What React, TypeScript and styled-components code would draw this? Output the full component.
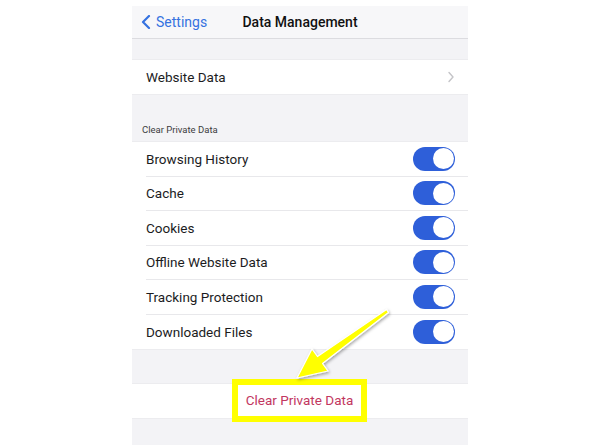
import styled, { createGlobalStyle } from "styled-components";

const GlobalStyle = createGlobalStyle`
  body {
    margin: 0;
    background: #ffffff;
    font-family: Roboto, Inter, sans-serif;
  }
`;

const Page = styled.div`
  position: relative;
  width: 600px;
  height: 445px;
  overflow: hidden;
  background: #ffffff;
`;

const Phone = styled.div`
  width: 336px;
  height: 439px;
  margin: 6px auto 0;
  background: #f3f3f6;
  display: flex;
  flex-direction: column;
`;

const NavBar = styled.div`
  height: 32px;
  flex: none;
  display: grid;
  grid-template-columns: 1fr auto 1fr;
  align-items: center;
  background: #f7f7f9;
  border-bottom: 1px solid #dcdce0;
`;

const BackButton = styled.div`
  display: flex;
  align-items: center;
  gap: 5px;
  padding-left: 9px;
  color: #3572e0;
  font-size: 14px;
`;

const Title = styled.div`
  font-size: 14px;
  font-weight: 500;
  color: #111;
`;

const Gap = styled.div<{ $h: number }>`
  height: ${(p) => p.$h}px;
  flex: none;
`;

const SectionHeader = styled.div`
  height: 46px;
  flex: none;
  display: flex;
  align-items: flex-end;
  padding: 0 0 6px 10px;
  box-sizing: border-box;
  font-size: 9.5px;
  color: #3c3c40;
`;

const Group = styled.div`
  background: #ffffff;
  border-top: 1px solid #ececef;
  border-bottom: 1px solid #ececef;
  flex: none;
`;

const Row = styled.div`
  padding-left: 14px;
`;

const RowInner = styled.div<{ $last?: boolean; $h?: number }>`
  height: ${(p) => p.$h ?? 34.5}px;
  box-sizing: border-box;
  display: flex;
  align-items: center;
  justify-content: space-between;
  padding-right: 13px;
  border-bottom: ${(p) => (p.$last ? "none" : "1px solid #e8e8eb")};
  font-size: 13.5px;
  color: #1c1c1e;
`;

const Toggle = styled.div`
  width: 42px;
  height: 24px;
  border-radius: 12px;
  background: #2e5fd9;
  display: flex;
  align-items: center;
  justify-content: flex-end;
  padding: 0 1.5px;
  box-sizing: border-box;
`;

const Knob = styled.div`
  width: 21px;
  height: 21px;
  border-radius: 50%;
  background: #ffffff;
`;

const ActionRow = styled.div`
  height: 34px;
  display: flex;
  align-items: center;
  justify-content: center;
`;

const Highlight = styled.div`
  border: 6px solid #ffff00;
  padding: 7px 8px 8px;
  margin: -1px 1px 0 0;
  background: #ffffff;
  color: #c2375f;
  font-size: 13.5px;
`;

const ArrowLayer = styled.svg`
  position: absolute;
  left: 0;
  top: 0;
  pointer-events: none;
`;

const toggles = [
  "Browsing History",
  "Cache",
  "Cookies",
  "Offline Website Data",
  "Tracking Protection",
  "Downloaded Files",
];

function App() {
  return (
    <Page>
      <GlobalStyle />
      <Phone>
        <NavBar>
          <BackButton>
            <svg width="10" height="14" viewBox="0 0 10 14">
              <path d="M8 1 L2 7 L8 13" fill="none" stroke="#3572e0" strokeWidth="2.2" strokeLinecap="round" strokeLinejoin="round" />
            </svg>
            Settings
          </BackButton>
          <Title>Data Management</Title>
          <div />
        </NavBar>
        <Gap $h={20} />
        <Group>
          <Row>
            <RowInner $last $h={34}>
              Website Data
              <svg width="8" height="12" viewBox="0 0 8 12">
                <path d="M2 1.5 L6 6 L2 10.5" fill="none" stroke="#c4c4c8" strokeWidth="1.4" strokeLinecap="round" strokeLinejoin="round" />
              </svg>
            </RowInner>
          </Row>
        </Group>
        <SectionHeader>Clear Private Data</SectionHeader>
        <Group>
          {toggles.map((t, i) => (
            <Row key={t}>
              <RowInner $last={i === toggles.length - 1}>
                {t}
                <Toggle>
                  <Knob />
                </Toggle>
              </RowInner>
            </Row>
          ))}
        </Group>
        <Gap $h={33} />
        <Group>
          <ActionRow>
            <Highlight>Clear Private Data</Highlight>
          </ActionRow>
        </Group>
      </Phone>
      <ArrowLayer width="600" height="445" viewBox="0 0 600 445">
        <defs>
          <filter id="shadow" x="-20%" y="-20%" width="140%" height="140%">
            <feDropShadow dx="1" dy="1.5" stdDeviation="1.5" floodColor="#000" floodOpacity="0.35" />
          </filter>
        </defs>
        <polygon
          points="297,378 312,349 317.5,356.5 386.5,309.5 388.5,312.5 322.5,363.5 328,371"
          fill="#ffff00"
          stroke="#ffffff"
          strokeWidth="1.2"
          strokeLinejoin="round"
          filter="url(#shadow)"
        />
      </ArrowLayer>
    </Page>
  );
}

export default App;
